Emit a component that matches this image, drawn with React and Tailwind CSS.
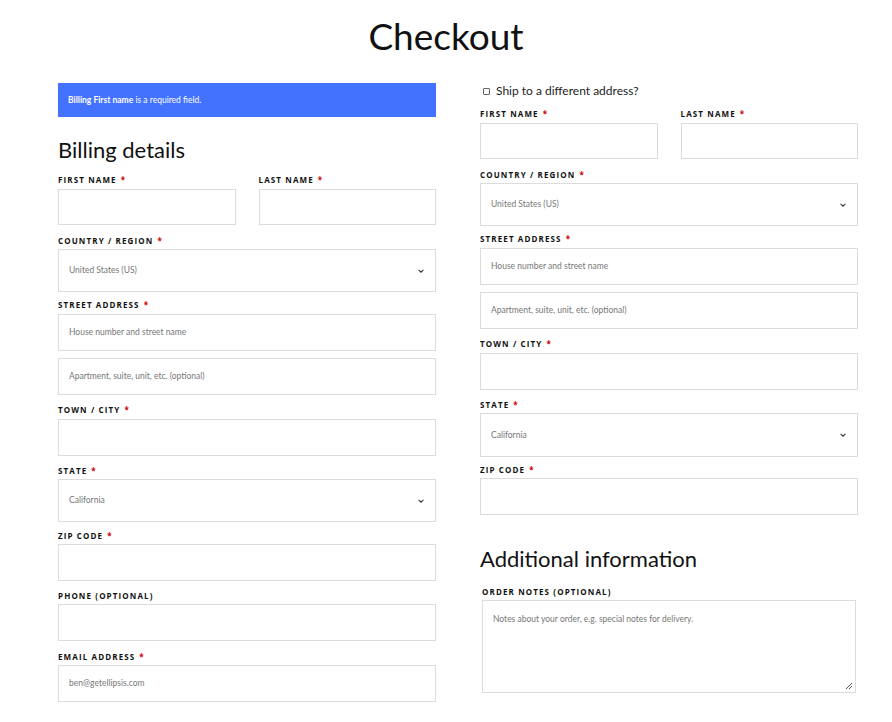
const F = { fontFamily: "Lato, 'Open Sans', sans-serif" };
const L = { fontFamily: "'Open Sans', 'DejaVu Sans', sans-serif" };

function Label({ text, req, mt }) {
  return (
    <div className={`h-[12px] flex items-center text-[8px] font-bold tracking-[0.14em] text-[#111] ${mt}`} style={L}>
      {text}
      {req && <span className="text-[#c00] ml-1">*</span>}
    </div>
  );
}
function Input({ h = "h-[37px]", mt = "mt-[3px]", ph, children }) {
  return (
    <div className={`${h} ${mt} border border-[#dcdcdc] bg-white flex items-center px-[10px] text-[8.5px] text-[#777]`} style={F}>
      {ph}
      {children}
    </div>
  );
}
function Select({ value, mt = "mt-[2px]", h = "h-[43px]" }) {
  return (
    <Input h={h} mt={mt}>
      <span className="flex-1">{value}</span>
      <svg width="8" height="8" viewBox="0 0 10 10"><path d="M2 3.5l3 3 3-3" fill="none" stroke="#333" strokeWidth="1.3" /></svg>
    </Input>
  );
}

export default function App() {
  return (
    <div className="w-[892px] h-[722px] bg-white overflow-hidden" style={F}>
      <h1 className="text-center text-[37px] leading-[44px] pt-[14px] text-[#111]" style={F}>Checkout</h1>
      <div className="flex gap-[44px] pl-[58px] mt-[25px]">
        <div className="w-[378px]">
          <div className="h-[34px] bg-[#4272ff] text-white text-[8.5px] flex items-center px-[10px]">
            <b>Billing First name</b>&nbsp;is a required field.
          </div>
          <h2 className="mt-[19px] text-[22px] leading-[28px] text-[#111]">Billing details</h2>
          <div className="flex gap-[23px] mt-[10px]">
            <div className="flex-1"><Label text="FIRST NAME" req /><Input h="h-[36px]" /></div>
            <div className="flex-1"><Label text="LAST NAME" req /><Input h="h-[36px]" /></div>
          </div>
          <Label text="COUNTRY / REGION" req mt="mt-[10px]" />
          <Select value="United States (US)" />
          <Label text="STREET ADDRESS" req mt="mt-[7px]" />
          <Input ph="House number and street name" />
          <Input mt="mt-[7px]" ph="Apartment, suite, unit, etc. (optional)" />
          <Label text="TOWN / CITY" req mt="mt-[9px]" />
          <Input />
          <Label text="STATE" req mt="mt-[9px]" />
          <Select value="California" />
          <Label text="ZIP CODE" req mt="mt-[8px]" />
          <Input mt="mt-[2px]" />
          <Label text="PHONE (OPTIONAL)" mt="mt-[9px]" />
          <Input mt="mt-[2px]" />
          <Label text="EMAIL ADDRESS" req mt="mt-[10px]" />
          <Input mt="mt-[2px]" ph="ben@getellipsis.com" />
        </div>
        <div className="w-[378px]">
          <div className="h-[16px] flex items-center text-[12px] text-[#222]">
            <span className="w-[7px] h-[7px] border border-[#666] rounded-[1px] mx-[3px] mr-[6px]" />
            Ship to a different address?
          </div>
          <div className="flex gap-[23px] mt-[9px]">
            <div className="flex-1"><Label text="FIRST NAME" req /><Input h="h-[36px]" /></div>
            <div className="flex-1"><Label text="LAST NAME" req /><Input h="h-[36px]" /></div>
          </div>
          <Label text="COUNTRY / REGION" req mt="mt-[10px]" />
          <Select value="United States (US)" />
          <Label text="STREET ADDRESS" req mt="mt-[7px]" />
          <Input ph="House number and street name" />
          <Input mt="mt-[7px]" ph="Apartment, suite, unit, etc. (optional)" />
          <Label text="TOWN / CITY" req mt="mt-[9px]" />
          <Input />
          <Label text="STATE" req mt="mt-[9px]" />
          <Select value="California" h="h-[44px]" />
          <Label text="ZIP CODE" req mt="mt-[7px]" />
          <Input mt="mt-[2px]" />
          <h2 className="mt-[30px] text-[22px] leading-[28px] text-[#111]">Additional information</h2>
          <div className="px-[2px]">
            <Label text="ORDER NOTES (OPTIONAL)" mt="mt-[13px]" />
            <div className="relative mt-[2px] h-[93px] border border-[#dcdcdc] px-[10px] pt-[12px] text-[8.5px] text-[#777]">
              Notes about your order, e.g. special notes for delivery.
              <svg className="absolute right-[2px] bottom-[2px]" width="8" height="8" viewBox="0 0 8 8"><path d="M7 1L1 7M7 4L4 7" stroke="#555" strokeWidth="1" /></svg>
            </div>
          </div>
        </div>
      </div>
    </div>
  );
}
